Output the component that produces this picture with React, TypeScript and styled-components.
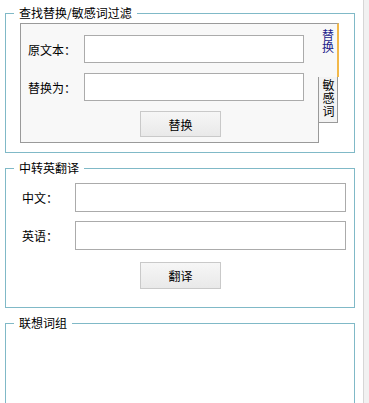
import React from "react";
import styled, { createGlobalStyle } from "styled-components";

const Global = createGlobalStyle`
  html, body { margin: 0; padding: 0; background: #ffffff; overflow: hidden; }
  body { font-family: "Noto Sans CJK SC", "Microsoft YaHei", sans-serif; font-size: 12px; color: #000; }
  * { box-sizing: border-box; }
`;

const Screen = styled.div`
  display: flex;
  width: 369px;
  height: 403px;
  overflow: hidden;
`;

const Main = styled.div`
  width: 363px;
  display: flex;
  flex-direction: column;
  padding-left: 5px;
`;

const Strip = styled.div`
  flex: 1;
  border-left: 1px solid #d6d6d6;
  background: #f1f1f1;
`;

const Group = styled.fieldset<{ $top: number; $minH?: number }>`
  margin: ${(p) => p.$top}px 0 0 0;
  padding: 0;
  width: 350px;
  border: 1px solid #80b9c7;
  min-width: 0;
  ${(p) => (p.$minH ? `min-height: ${p.$minH}px;` : "")}
`;

const Legend = styled.legend`
  margin-left: 8px;
  padding: 0 5px;
  font-size: 12px;
  line-height: 14px;
  height: 14px;
`;

const GroupBody = styled.div<{ $pad: string }>`
  padding: ${(p) => p.$pad};
`;

const TabControl = styled.div`
  display: flex;
  align-items: flex-start;
`;

const Page = styled.div`
  width: 299px;
  height: 120px;
  border: 1px solid #9a9a9a;
  background: #f8f8f8;
  padding: 11px 0 0 7px;
  display: flex;
  flex-direction: column;
  gap: 10px;
`;

const TabStrip = styled.div`
  display: flex;
  flex-direction: column;
  margin-left: -1px;
  position: relative;
  z-index: 1;
`;

const Tab = styled.div<{ $active?: boolean }>`
  writing-mode: vertical-rl;
  font-size: 12px;
  line-height: 12px;
  display: flex;
  align-items: center;
  ${(p) =>
    p.$active
      ? `
    width: 21px;
    height: 54px;
    padding-top: 5px;
    background: #f8f8f8;
    border-top: 1px solid #9a9a9a;
    border-right: 2px solid #f2b84a;
    color: #1c1c8a;
  `
      : `
    width: 20px;
    height: 46px;
    padding-top: 2px;
    background: #f3f3f3;
    border: 1px solid #9a9a9a;
    border-top: none;
    color: #000;
    letter-spacing: 1px;
  `}
`;

const Row = styled.div<{ $label: number; $h: number }>`
  display: grid;
  grid-template-columns: ${(p) => p.$label}px auto;
  align-items: center;
  height: ${(p) => p.$h}px;
`;

const Label = styled.span`
  font-size: 12px;
  white-space: nowrap;
`;

const Input = styled.input<{ $w: number }>`
  width: ${(p) => p.$w}px;
  height: 100%;
  border: 1px solid #ababab;
  background: #fff;
  margin: 0;
  padding: 0 4px;
  outline: none;
  font: inherit;
`;

const Button = styled.button<{ $left: number; $h: number; $top?: number }>`
  margin: ${(p) => p.$top ?? 0}px 0 0 ${(p) => p.$left}px;
  width: 81px;
  height: ${(p) => p.$h}px;
  border: 1px solid #c9c9c9;
  background: linear-gradient(#f6f6f6, #e9e9e9);
  font-family: "Noto Sans CJK SC", sans-serif;
  font-size: 12px;
  color: #000;
  padding: 0;
  align-self: flex-start;
`;

const Stack = styled.div<{ $gap: number }>`
  display: flex;
  flex-direction: column;
  gap: ${(p) => p.$gap}px;
`;

export default function App() {
  return (
    <>
      <Global />
      <Screen>
        <Main>
          <Group $top={6}>
            <Legend>查找替换/敏感词过滤</Legend>
            <GroupBody $pad="3px 0 9px 14px">
              <TabControl>
                <Page>
                  <Row $label={56} $h={28}>
                    <Label>原文本：</Label>
                    <Input $w={220} />
                  </Row>
                  <Row $label={56} $h={28}>
                    <Label>替换为：</Label>
                    <Input $w={220} />
                  </Row>
                  <Button $left={112} $h={26}>替换</Button>
                </Page>
                <TabStrip>
                  <Tab $active>替换</Tab>
                  <Tab>敏感词</Tab>
                </TabStrip>
              </TabControl>
            </GroupBody>
          </Group>

          <Group $top={8}>
            <Legend>中转英翻译</Legend>
            <GroupBody $pad="8px 8px 18px 16px">
              <Stack $gap={9}>
                <Row $label={53} $h={29}>
                  <Label>中文：</Label>
                  <Input $w={271} />
                </Row>
                <Row $label={53} $h={29}>
                  <Label>英语：</Label>
                  <Input $w={271} />
                </Row>
                <Button $left={118} $h={27} $top={3}>翻译</Button>
              </Stack>
            </GroupBody>
          </Group>

          <Group $top={8} $minH={140}>
            <Legend>联想词组</Legend>
            <GroupBody $pad="0" />
          </Group>
        </Main>
        <Strip />
      </Screen>
    </>
  );
}
